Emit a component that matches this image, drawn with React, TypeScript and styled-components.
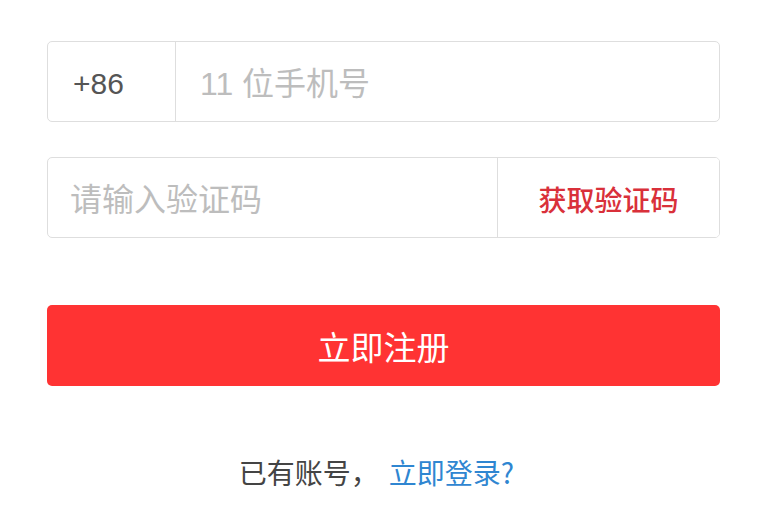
import * as React from 'react';
import styled, {createGlobalStyle} from 'styled-components';

const GlobalStyle = createGlobalStyle`
	html, body {
		margin: 0;
		padding: 0;
		background: #fff;
		font-family: "Noto Sans CJK SC", "Liberation Sans", sans-serif;
	}
`;

const Page = styled.div`
	width: 768px;
	height: 510px;
	box-sizing: border-box;
	padding: 41px 48px 0 47px;
	display: flex;
	flex-direction: column;
`;

const Field = styled.div<{gap: number}>`
	display: flex;
	height: 81px;
	box-sizing: border-box;
	border: 1px solid #dedede;
	border-radius: 5px;
	margin-bottom: ${(props) => props.gap}px;
	overflow: hidden;
`;

const Prefix = styled.div`
	width: 128px;
	flex-shrink: 0;
	border-right: 1px solid #dedede;
	display: flex;
	align-items: center;
	padding: 4px 0 0 25px;
	box-sizing: border-box;
	font-family: "Liberation Sans", sans-serif;
	font-size: 30px;
	color: #555;
`;

const Input = styled.input<{pad: number}>`
	flex: 1;
	min-width: 0;
	border: none;
	outline: none;
	padding: 5px 0 0 ${(props) => props.pad}px;
	font-family: "Liberation Sans", "Noto Sans CJK SC", sans-serif;
	font-size: 32px;
	color: #333;
	background: transparent;
	&::placeholder {
		color: #bdbdbd;
	}
`;

const CodeButton = styled.button`
	width: 222px;
	flex-shrink: 0;
	border: none;
	border-left: 1px solid #dedede;
	background: #fff;
	color: #d9303a;
	font-family: "Noto Sans CJK SC", sans-serif;
	font-size: 28px;
	font-weight: 500;
	cursor: pointer;
	padding: 2px 0 0;
`;

const Submit = styled.button`
	height: 81px;
	margin-top: 67px;
	border: none;
	border-radius: 5px;
	background: #ff3333;
	color: #fff;
	font-family: "Noto Sans CJK SC", sans-serif;
	font-size: 33px;
	cursor: pointer;
`;

const Footer = styled.div`
	margin-top: 66px;
	text-align: center;
	font-size: 28px;
	color: #444;
	padding-right: 14px;
`;

const LoginLink = styled.a`
	color: #2f86d1;
	text-decoration: none;
	margin-left: 10px;
	&:hover {
		color: #ff3333;
	}
`;

const App = () => {
	return (
		<>
			<GlobalStyle />
			<Page>
				<Field gap={35}>
					<Prefix>+86</Prefix>
					<Input pad={24} placeholder="11 位手机号" />
				</Field>
				<Field gap={0}>
					<Input pad={22} placeholder="请输入验证码" />
					<CodeButton>获取验证码</CodeButton>
				</Field>
				<Submit>立即注册</Submit>
				<Footer>
					已有账号，<LoginLink href="#">立即登录?</LoginLink>
				</Footer>
			</Page>
		</>
	);
};

export default App;
